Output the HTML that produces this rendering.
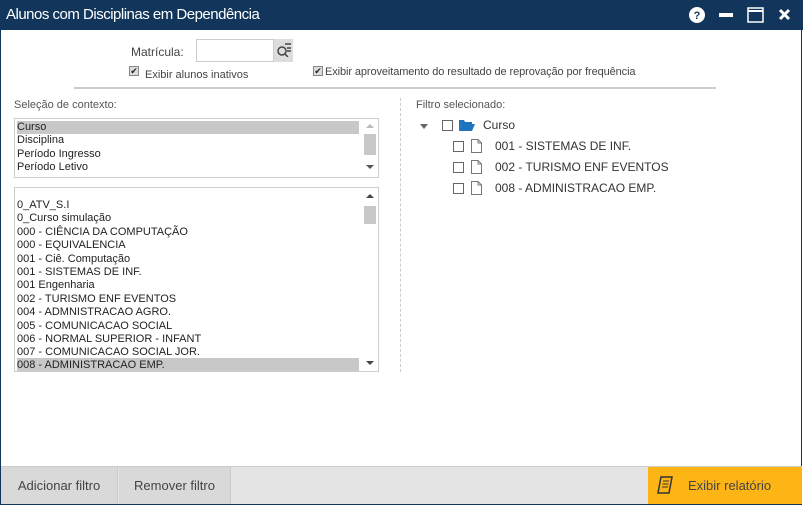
<!DOCTYPE html>
<html><head><meta charset="utf-8"><style>
*{margin:0;padding:0;box-sizing:border-box}
body{width:803px;height:507px;background:#fff;font-family:"Liberation Sans",sans-serif;position:relative;overflow:hidden;color:#333}
.win{position:absolute;left:0;top:0;width:802px;height:505px;border:1px solid #12355b;}
.title{position:absolute;left:0;top:0;width:803px;height:30px;background:#12355b;color:#fff;font-size:15px;line-height:30px;padding-left:6px;letter-spacing:-0.5px}
.a{position:absolute;font-size:11px;white-space:nowrap}
.cb{position:absolute;width:10px;height:10px;border:1px solid #888;background:#ddd;font-size:9px;line-height:8px;text-align:center;color:#222}
.box{position:absolute;border:1px solid #ccc;background:#fff;overflow:hidden}
.it{position:absolute;left:2px;font-size:11px;height:13px;line-height:13px;color:#222;white-space:nowrap}
.sb{position:absolute;right:0;top:0;width:16px;height:100%;background:#fff}
.thumb{position:absolute;left:2px;width:12px;background:#c8c8c8}
.tcb{position:absolute;width:11px;height:11px;border:1px solid #666;background:#fff}
.doc{position:absolute}
</style></head><body>
<div class="win"></div>
<div class="title">Alunos com Disciplinas em Dependência</div>
<svg style="position:absolute;left:688px;top:6px" width="110" height="18">
<circle cx="9" cy="9" r="8" fill="#fff"/><text x="9" y="13" font-size="11" font-weight="bold" text-anchor="middle" fill="#12355b" font-family="Liberation Sans">?</text>
<rect x="31" y="7" width="14" height="4" fill="#fff"/>
<rect x="60" y="2" width="15" height="14" fill="none" stroke="#fff" stroke-width="1.5"/><line x1="60" y1="5" x2="75" y2="5" stroke="#fff" stroke-width="2"/>
<path d="M92 4 L101 13 M101 4 L92 13" stroke="#fff" stroke-width="3"/>
</svg>
<div class="a" style="left:131px;top:45px;font-size:12px;color:#444">Matrícula:</div>
<div style="position:absolute;left:196px;top:39px;width:78px;height:23px;border:1px solid #ccc"></div>
<div style="position:absolute;left:274px;top:39px;width:19px;height:23px;background:#ddd"></div>
<svg style="position:absolute;left:276px;top:43px" width="16" height="14"><circle cx="6" cy="8" r="4" fill="none" stroke="#444" stroke-width="1.5"/><path d="M9 11 L12 14 M9 1 H15 M11 5H15 M11 8H15" stroke="#444" stroke-width="1.5"/></svg>
<div class="cb" style="left:129px;top:66px">✔</div>
<div class="a" style="left:145px;top:69px;color:#444">Exibir alunos inativos</div>
<div class="cb" style="left:313px;top:66px">✔</div>
<div class="a" style="left:325px;top:66px;color:#444;letter-spacing:-0.1px">Exibir aproveitamento do resultado de reprovação por frequência</div>
<div style="position:absolute;left:74px;top:87px;width:642px;height:2px;background:#ccc"></div>
<div class="a" style="left:14px;top:99px;color:#555">Seleção de contexto:</div>
<div class="box" style="left:14px;top:118px;width:365px;height:60px">
<div style="position:absolute;left:2px;top:2px;width:342px;height:13px;background:#c8c8c8"></div>
<div class="it" style="top:2px">Curso</div><div class="it" style="top:15px">Disciplina</div><div class="it" style="top:28.5px">Período Ingresso</div><div class="it" style="top:42px">Período Letivo</div>
<div class="sb"><div style="position:absolute;left:4px;top:5px;border:4px solid transparent;border-bottom:4px solid #bbb;border-top:0"></div><div class="thumb" style="top:15px;height:21px"></div><div style="position:absolute;left:4px;top:46px;border:4px solid transparent;border-top:4px solid #555;border-bottom:0"></div></div>
</div>
<div class="box" style="left:14px;top:187px;width:365px;height:185px">
<div style="position:absolute;left:2px;top:170px;width:342px;height:13px;background:#c8c8c8"></div>
<div class="it" style="top:11px">0_ATV_S.I</div><div class="it" style="top:24.4px">0_Curso simulação</div><div class="it" style="top:37.8px">000 - CIÊNCIA DA COMPUTAÇÃO</div><div class="it" style="top:51.2px">000 - EQUIVALENCIA</div><div class="it" style="top:64.6px">001 - Ciê. Computação</div><div class="it" style="top:78px">001 - SISTEMAS DE INF.</div><div class="it" style="top:91.4px">001 Engenharia</div><div class="it" style="top:104.8px">002 - TURISMO ENF EVENTOS</div><div class="it" style="top:118.2px">004 - ADMNISTRACAO AGRO.</div><div class="it" style="top:131.6px">005 - COMUNICACAO SOCIAL</div><div class="it" style="top:145px">006 - NORMAL SUPERIOR - INFANT</div><div class="it" style="top:158.4px">007 - COMUNICACAO SOCIAL JOR.</div><div class="it" style="top:171px">008 - ADMINISTRACAO EMP.</div>
<div class="sb"><div style="position:absolute;left:4px;top:6px;border:4px solid transparent;border-bottom:4px solid #444;border-top:0"></div><div class="thumb" style="top:18px;height:18px"></div><div style="position:absolute;left:4px;top:173px;border:4px solid transparent;border-top:4px solid #444;border-bottom:0"></div></div>
</div>
<div style="position:absolute;left:400px;top:98px;height:274px;border-left:1px dashed #ccc"></div>
<div class="a" style="left:416px;top:99px;color:#555">Filtro selecionado:</div>
<div style="position:absolute;left:420px;top:124px;border:4px solid transparent;border-top:5px solid #666;border-bottom:0"></div>
<div class="tcb" style="left:442px;top:120px"></div>
<svg style="position:absolute;left:459px;top:119px" width="16" height="12"><path d="M0 1H5L6 3H13V5H3L0 12Z" fill="#1e73be"/><path d="M3 5H16L13 12H0Z" fill="#1e73be"/></svg>
<div class="a" style="left:483px;top:118px;font-size:12px;color:#333">Curso</div>
<svg class="doc" style="left:471px;top:139px" width="11" height="14"><path d="M0.5 0.5H7L10.5 4V13.5H0.5Z M7 0.5V4H10.5" fill="#fff" stroke="#777"/></svg>
<svg class="doc" style="left:471px;top:160px" width="11" height="14"><path d="M0.5 0.5H7L10.5 4V13.5H0.5Z M7 0.5V4H10.5" fill="#fff" stroke="#777"/></svg>
<svg class="doc" style="left:471px;top:181px" width="11" height="14"><path d="M0.5 0.5H7L10.5 4V13.5H0.5Z M7 0.5V4H10.5" fill="#fff" stroke="#777"/></svg>
<div class="tcb" style="left:453px;top:141px"></div><div class="a" style="left:495px;top:139px;font-size:12px">001 - SISTEMAS DE INF.</div>
<div class="tcb" style="left:453px;top:162px"></div><div class="a" style="left:495px;top:160px;font-size:12px">002 - TURISMO ENF EVENTOS</div>
<div class="tcb" style="left:453px;top:183px"></div><div class="a" style="left:495px;top:181px;font-size:12px">008 - ADMINISTRACAO EMP.</div>
<div style="position:absolute;left:1px;top:466px;width:801px;height:38px;background:#e4e4e4;border-top:1px solid #ccc"></div>
<div style="position:absolute;left:1px;top:467px;width:117px;height:37px;background:#d9d9d9;border-right:1px solid #ccc;font-size:13px;line-height:37px;text-align:center;color:#444">Adicionar filtro</div>
<div style="position:absolute;left:119px;top:467px;width:112px;height:37px;background:#d9d9d9;border-right:1px solid #ccc;font-size:13px;line-height:37px;text-align:center;color:#444">Remover filtro</div>
<div style="position:absolute;left:648px;top:467px;width:154px;height:37px;background:#fdb515;font-size:13px;line-height:37px;color:#444;padding-left:40px">Exibir relatório</div>
<svg style="position:absolute;left:656px;top:476px" width="18" height="20"><path d="M5 1H16L13 17H2Z" fill="none" stroke="#333" stroke-width="1.5"/><path d="M7 5H13M6.5 8H12.5M6 11H12" stroke="#333"/></svg>
</body></html>
